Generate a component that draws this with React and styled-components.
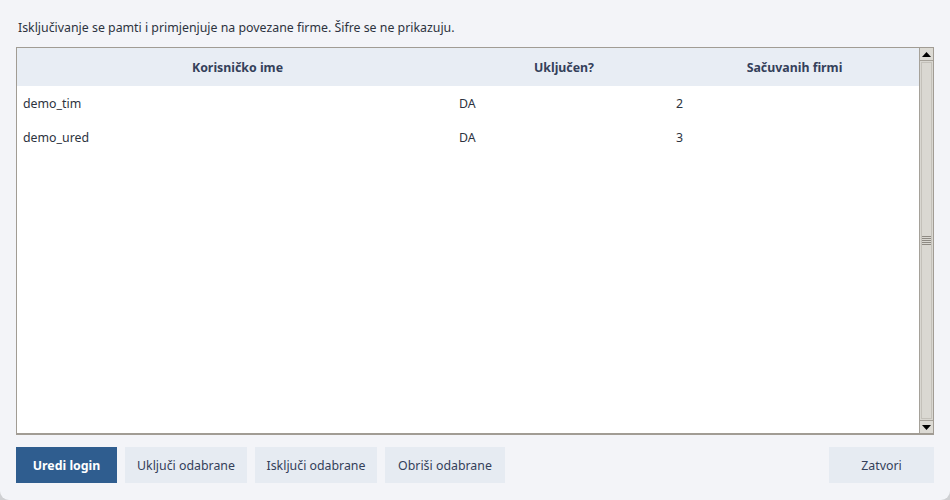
import React from "react";
import styled, { createGlobalStyle } from "styled-components";

const Global = createGlobalStyle`
  html, body { margin: 0; padding: 0; background: #cfd0d3; }
  body { font-family: "Noto Sans", "Open Sans", sans-serif; }
  * { box-sizing: border-box; }
`;

const Window = styled.div`
  width: 950px;
  height: 500px;
  background: #f3f4f8;
  border-radius: 0 0 9px 9px;
  padding: 16px 16px 16px 16px;
  display: flex;
  flex-direction: column;
`;

const Note = styled.div`
  font-size: 12.35px;
  color: #2d3340;
  height: 31px;
  padding: 2px 0 0 2px;
  line-height: 20px;
`;

const TableFrame = styled.div`
  height: 388px;
  border: 1px solid #a19c94;
  border-bottom-width: 2px;
  background: #fff;
  display: flex;
`;

const TableBody = styled.div`
  flex: 1;
  display: flex;
  flex-direction: column;
`;

const Row = styled.div`
  display: grid;
  grid-template-columns: 441px 212px 1fr;
  height: ${(p) => (p.$head ? 38 : 34)}px;
  align-items: center;
  background: ${(p) => (p.$head ? "#e8edf4" : "transparent")};
`;

const HeadCell = styled.div`
  text-align: center;
  font-weight: 700;
  font-size: 12.35px;
  color: #34405a;
`;

const Cell = styled.div`
  font-size: 12.35px;
  color: #2d3340;
  padding-left: ${(p) => p.$pad}px;
`;

const Scrollbar = styled.div`
  width: 14px;
  display: flex;
  flex-direction: column;
  background: #d9d7d1;
  border-left: 1px solid #a5a199;
`;

const Arrow = styled.div`
  height: 13px;
  display: flex;
  align-items: center;
  justify-content: center;
  background: #dcdad4;
  border-bottom: ${(p) => (p.$up ? "1px solid #a5a199" : "none")};
  border-top: ${(p) => (p.$up ? "none" : "1px solid #a5a199")};
`;

const Thumb = styled.div`
  flex: 1;
  margin: 1px 1px;
  background: #dad8d2;
  border: 1px solid #c4c1ba;
  display: flex;
  align-items: center;
  justify-content: center;
`;

const Grip = styled.div`
  width: 9px;
  height: 9px;
  background: repeating-linear-gradient(
    to bottom,
    #8e8a83 0px,
    #8e8a83 1px,
    transparent 1px,
    transparent 2px
  );
`;

const Footer = styled.div`
  display: flex;
  gap: 8px;
  margin-top: 12px;
  height: 36px;
`;

const Button = styled.button`
  height: 36px;
  width: ${(p) => p.$w}px;
  border: none;
  padding: 0;
  font-family: "Noto Sans", "Open Sans", sans-serif;
  font-size: 12.35px;
  font-weight: ${(p) => (p.$primary ? 700 : 400)};
  color: ${(p) => (p.$primary ? "#ffffff" : "#34405a")};
  background: ${(p) => (p.$primary ? "#2f5d8f" : "#e6ebf2")};
  margin-left: ${(p) => (p.$push ? "auto" : "0")};
`;

const Tri = ({ up }) => (
  <svg width="9" height="5" viewBox="0 0 9 5">
    <polygon points={up ? "4.5,0 9,5 0,5" : "0,0 9,0 4.5,5"} fill="#000" />
  </svg>
);

const rows = [
  { name: "demo_tim", on: "DA", n: "2" },
  { name: "demo_ured", on: "DA", n: "3" },
];

export default function App() {
  return (
    <>
      <Global />
      <Window>
        <Note>Isključivanje se pamti i primjenjuje na povezane firme. Šifre se ne prikazuju.</Note>
        <TableFrame>
          <TableBody>
            <Row $head>
              <HeadCell>Korisničko ime</HeadCell>
              <HeadCell>Uključen?</HeadCell>
              <HeadCell>Sačuvanih firmi</HeadCell>
            </Row>
            {rows.map((r) => (
              <Row key={r.name}>
                <Cell $pad={6}>{r.name}</Cell>
                <Cell $pad={1}>{r.on}</Cell>
                <Cell $pad={6}>{r.n}</Cell>
              </Row>
            ))}
          </TableBody>
          <Scrollbar>
            <Arrow $up>
              <Tri up />
            </Arrow>
            <Thumb>
              <Grip />
            </Thumb>
            <Arrow>
              <Tri />
            </Arrow>
          </Scrollbar>
        </TableFrame>
        <Footer>
          <Button $primary $w={101}>Uredi login</Button>
          <Button $w={122}>Uključi odabrane</Button>
          <Button $w={122}>Isključi odabrane</Button>
          <Button $w={120}>Obriši odabrane</Button>
          <Button $push $w={105}>Zatvori</Button>
        </Footer>
      </Window>
    </>
  );
}
